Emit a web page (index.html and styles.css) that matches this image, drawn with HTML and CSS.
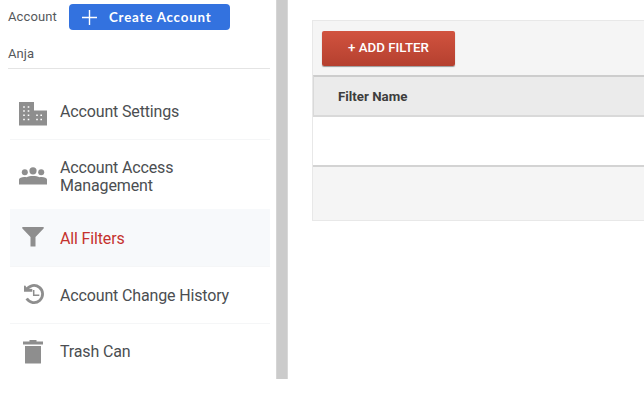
FILE: index.html
```html
<!DOCTYPE html>
<html lang="en">
<head>
<meta charset="utf-8">
<title>All Filters</title>
<link rel="stylesheet" href="styles.css">
</head>
<body>
<div class="page">
  <aside class="sidebar">
    <div class="account-bar">
      <span class="account-label">Account</span>
      <button class="create"><svg class="plus" viewBox="0 0 15 15"><path d="M7.5 0v15M0 7.5h15"/></svg><span class="create-text">Create Account</span></button>
    </div>
    <div class="account-name">Anja</div>
    <nav class="menu">
      <a class="item"><span class="icon"><svg width="28" height="24" viewBox="0 0 28 24"><path fill-rule="evenodd" d="M0 0h15v8.500h13V23.500H0zM4.200 4.200v1.600h1.600V4.200zM8.700 4.200v1.600h1.600V4.200zM4.200 8.200v1.600h1.600V8.200zM8.700 8.200v1.600h1.600V8.200zM4.200 12.500v1.600h1.600v-1.600zM8.700 12.500v1.600h1.600v-1.600zM4.200 16.700v1.600h1.600v-1.600zM8.700 16.700v1.600h1.600v-1.600zM17.200 12.500v1.600h1.600v-1.600zM21.400 12.500v1.600h1.600v-1.600zM17.200 16.700v1.600h1.600v-1.600zM21.400 16.700v1.600h1.600v-1.600z"/></svg></span><span class="label">Account Settings</span></a>
      <a class="item tall"><span class="icon"><svg width="28" height="18" viewBox="0 0 28 18"><circle cx="14" cy="3.800" r="3.600"/><circle cx="5.800" cy="5.300" r="3"/><circle cx="22.200" cy="5.300" r="3"/><path d="M0 17.500v-5c0-2 4.500-3 7.500-2.200 3-1.700 10-1.700 13 0 3-.8 7.500.2 7.500 2.200v5z"/></svg></span><span class="label">Account Access<br>Management</span></a>
      <a class="item active"><span class="icon"><svg width="22" height="20" viewBox="0 0 22 20"><path d="M1 0h20q1.400.2.600 1.400L13.500 10v9.500h-5V10L.4 1.400Q-.4.200 1 0z"/></svg></span><span class="label">All Filters</span></a>
      <a class="item"><span class="icon"><svg class="history" width="21" height="21" viewBox="0 0 21 21"><path class="ring" d="M2.500 5.800A8.600 8.600 0 1 1 2.700 14.600"/><path d="M0 1.700l1.200-.2 2.100 3 5 .5v2.800H0z"/><path class="hands" d="M9.700 6v5.200h5.600"/></svg></span><span class="label">Account Change History</span></a>
      <a class="item"><span class="icon"><svg class="trash" width="20" height="24" viewBox="0 0 20 24"><path d="M6.500 0h7v1.500H20v3H0v-3h6.500zM2 6h16v17q0 .5-.5.500h-15q-.5 0-.5-.5z"/></svg></span><span class="label trash-label">Trash Can</span></a>
    </nav>
  </aside>
  <div class="divider"></div>
  <main class="panel">
    <div class="toolbar"><button class="add">+ ADD FILTER</button></div>
    <div class="thead">Filter Name</div>
    <div class="tbody"></div>
    <div class="tfoot"></div>
  </main>
</div>
</body>
</html>
```
FILE: styles.css
```css
* { box-sizing: border-box; }
body { margin: 0; background: #fff; font-family: Roboto, "Liberation Sans", sans-serif; color: #4b4e51; overflow: hidden; }
button { border: 0; padding: 0; }
.page { display: flex; width: 644px; height: 406px; }
.sidebar { width: 276px; flex: none; }
.account-bar { display: flex; align-items: center; height: 34px; padding-left: 8px; }
.account-label { width: 61px; padding-bottom: 2px; font-size: 13px; letter-spacing: 0.1px; color: #55585b; }
.create { display: flex; align-items: center; width: 161px; height: 26px; padding-left: 13px; border-radius: 4px; background: #3372df; color: #fff; }
.plus { width: 15px; height: 15px; margin-right: 12px; fill: none; stroke: #fff; stroke-width: 1.4; }
.create-text { font: 700 13.3px/18px Lato, sans-serif; letter-spacing: 0.8px; white-space: nowrap; }
.account-name { width: 262px; height: 35px; margin-left: 8px; padding-top: 11px; border-bottom: 1px solid #e4e4e4; font-size: 13px; line-height: 17px; letter-spacing: 0.1px; color: #55585b; }
.menu { margin: 14px 6px 0 10px; }
.item { display: flex; align-items: center; height: 57px; border-bottom: 1px solid #f5f6f7; }
.item.tall { height: 70px; border-color: #f7f9fb; }
.item.active { background: #f7f9fb; color: #c5322e; }
.item:last-child { height: 56px; border: 0; }
.icon { display: flex; justify-content: center; width: 46px; margin-right: 4px; }
.icon svg { fill: #8e8e8e; position: relative; top: 3px; left: -0.5px; }
.tall .icon svg { top: 1px; left: 0; }
.active .icon svg { top: -1px; }
.icon .history { top: -0.5px; left: 1px; }
.icon svg.trash { top: 0; left: 0; }
.ring { fill: none; stroke: #8e8e8e; stroke-width: 2.8; }
.hands { fill: none; stroke: #8e8e8e; stroke-width: 1.5; }
.label { padding-top: 2px; font-size: 16px; line-height: 18px; letter-spacing: -0.15px; white-space: nowrap; }
.tall .label { padding-top: 4px; }
.trash-label { padding-top: 0; }
.divider { width: 12px; height: 379px; flex: none; background: #cbcbcb; border-left: 1px solid #d5d5d5; border-right: 1px solid #d8d8d8; }
.panel { flex: 1; height: 201px; margin: 20px 0 0 24px; background: #f5f5f5; border: 1px solid #e8e8e8; border-right: 0; }
.toolbar { height: 54px; padding: 10px 0 0 9px; }
.add { display: block; width: 133px; height: 35px; border-radius: 2px; background: linear-gradient(#d1533f, #b5402f); box-shadow: 0 1px 1px #999; color: #fff; font: 500 13.3px/33px Roboto, sans-serif; padding-bottom: 2px; }
.thead { height: 42px; padding-left: 24px; border: solid #d9d9d9; border-width: 2px 0 2px 1px; border-top-color: #cdcdcd; background: #ebebeb; font-size: 13.3px; font-weight: 700; line-height: 39px; color: #3d3d3d; }
.tbody { height: 50px; background: #fff; border-bottom: 2px solid #d3d3d3; }
.tfoot { height: 53px; }
```
